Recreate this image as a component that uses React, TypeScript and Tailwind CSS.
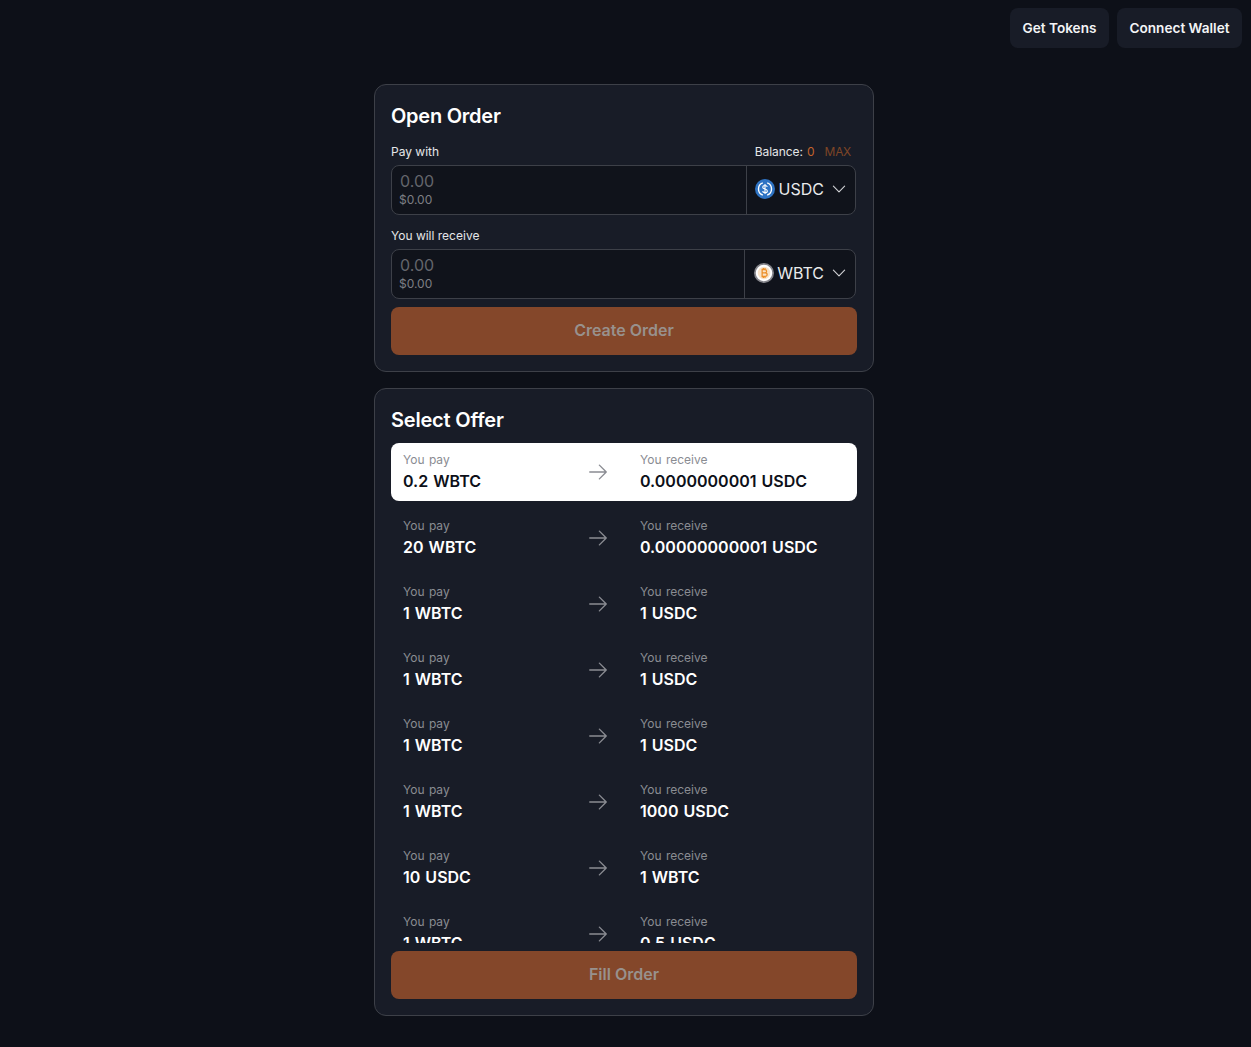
import React from "react";
import { HiOutlineArrowRight, HiOutlineChevronDown } from "react-icons/hi2";

const offers = [
  { pay: "0.2 WBTC", receive: "0.0000000001 USDC" },
  { pay: "20 WBTC", receive: "0.00000000001 USDC" },
  { pay: "1 WBTC", receive: "1 USDC" },
  { pay: "1 WBTC", receive: "1 USDC" },
  { pay: "1 WBTC", receive: "1 USDC" },
  { pay: "1 WBTC", receive: "1000 USDC" },
  { pay: "10 USDC", receive: "1 WBTC" },
  { pay: "1 WBTC", receive: "0.5 USDC" },
];

function UsdcLogo() {
  return (
    <svg width="20" height="20" viewBox="0 0 32 32" className="shrink-0">
      <circle cx="16" cy="16" r="16" fill="#2f74c4" />
      <path d="M12.5 6.2a10.4 10.4 0 0 0 0 19.6M19.5 6.2a10.4 10.4 0 0 1 0 19.6" fill="none" stroke="#fff" strokeWidth="2.2" />
      <path d="M19.6 12.6c-.3-1.5-1.7-2.3-3.6-2.3-2.1 0-3.6 1.1-3.6 2.8 0 1.8 1.4 2.4 3.6 2.9 2.3.5 3.7 1.1 3.7 3 0 1.7-1.6 2.8-3.7 2.8-2 0-3.5-.9-3.8-2.5M16 8v16" fill="none" stroke="#fff" strokeWidth="1.8" />
    </svg>
  );
}

function WbtcLogo() {
  return (
    <svg width="20" height="20" viewBox="0 0 32 32" className="shrink-0">
      <circle cx="16" cy="16" r="14.6" fill="#fff" stroke="#85858b" strokeWidth="2.8" />
      <circle cx="16" cy="16" r="10" fill="#f9e3c8" />
      <path d="M13 10.5h4.2c1.9 0 3 1 3 2.5s-1.1 2.6-3 2.6H13zM13 15.6h4.8c2 0 3.2 1.1 3.2 2.7s-1.2 2.9-3.2 2.9H13zM13 9v13.6M15 8v2.4M17.6 8v2.4M15 21.2v2.6M17.6 21.2v2.6" fill="none" stroke="#ec8f28" strokeWidth="2" />
    </svg>
  );
}

function TokenInput({ token, logo, padding, gap }: { token: string; logo: React.ReactNode; padding: string; gap: string }) {
  return (
    <div className="flex h-[50px] w-[465px] rounded-lg border border-[#3d4048] bg-[#10131b]">
      <div className="flex min-w-0 flex-1 flex-col pl-[7px] pt-1">
        <span className="pl-px text-base leading-[22px] text-[#63656b]">0.00</span>
        <span className="pt-px text-xs leading-[14px] text-[#7d7f84]">$0.00</span>
      </div>
      <div className={`flex items-center border-l border-[#3d4048] pb-0.5 pr-[7px] ${padding}`}>
        {logo}
        <span className={`${gap} text-base text-[#e9eaec]`}>{token}</span>
        <HiOutlineChevronDown className="ml-1.5 text-[#d0d1d4]" size={18} />
      </div>
    </div>
  );
}

export default function App() {
  return (
    <div className="min-h-screen bg-[#0d1018] font-['Inter',sans-serif] text-white">
      <div className="flex justify-end gap-2 pr-[9px] pt-2">
        <button className="h-10 w-[99px] rounded-lg bg-[#181c27] text-[13.6px] font-semibold text-[#f3f4f6]">Get Tokens</button>
        <button className="h-10 w-[125px] rounded-lg bg-[#181c27] text-[13.6px] font-semibold text-[#f3f4f6]">Connect Wallet</button>
      </div>

      <div className="flex flex-col items-center gap-4 pr-[3px] pt-9">
        <section className="h-[288px] w-[500px] rounded-xl border border-[#3d4048] bg-[#181c27] px-4 pt-[17px]">
          <h2 className="text-xl font-semibold leading-7 tracking-[-0.25px]">Open Order</h2>
          <div className="mt-[14px] flex h-4 w-[460px] items-center justify-between text-xs text-[#e5e6e8]">
            <span>Pay with</span>
            <span className="tracking-[-0.08px]">
              Balance: <span className="ml-px text-[#c2622c]">0</span>
              <span className="ml-[10px] tracking-[-0.3px] text-[#7e4526]">MAX</span>
            </span>
          </div>
          <div className="mt-[5px]">
            <TokenInput token="USDC" logo={<UsdcLogo />} padding="pl-2" gap="ml-1" />
          </div>
          <div className="mt-[13px] flex h-4 items-center text-xs text-[#e5e6e8]">You will receive</div>
          <div className="mt-[5px]">
            <TokenInput token="WBTC" logo={<WbtcLogo />} padding="pl-[9px]" gap="ml-[3px]" />
          </div>
          <button className="mt-2 h-12 w-full rounded-lg bg-[#84472a] pb-0.5 text-base font-semibold text-[#98918d]">Create Order</button>
        </section>

        <section className="h-[628px] w-[500px] rounded-xl border border-[#3d4048] bg-[#181c27] px-4 pt-[17px]">
          <h2 className="text-xl font-semibold leading-7 tracking-[-0.2px]">Select Offer</h2>
          <div className="mt-[9px] flex h-[500px] flex-col gap-2 overflow-hidden">
            {offers.map((offer, i) => (
              <div
                key={i}
                className={`flex h-[58px] shrink-0 items-center rounded-lg px-3 [word-spacing:1px] ${i === 0 ? "bg-white text-[#0d1018]" : "text-white"}`}
              >
                <div className="w-[184px]">
                  <div className="pt-px text-xs leading-4 text-[#8a8c92]">You pay</div>
                  <div className="mt-px text-base font-semibold leading-6">{offer.pay}</div>
                </div>
                <HiOutlineArrowRight className="shrink-0 text-[#8a8c92]" size={22} />
                <div className="ml-[31px]">
                  <div className="pt-px text-xs leading-4 text-[#8a8c92]">You receive</div>
                  <div className="mt-px text-base font-semibold leading-6">{offer.receive}</div>
                </div>
              </div>
            ))}
          </div>
          <button className="mt-2 h-12 w-full rounded-lg bg-[#84472a] pb-0.5 text-base font-semibold text-[#98918d]">Fill Order</button>
        </section>
      </div>
    </div>
  );
}
